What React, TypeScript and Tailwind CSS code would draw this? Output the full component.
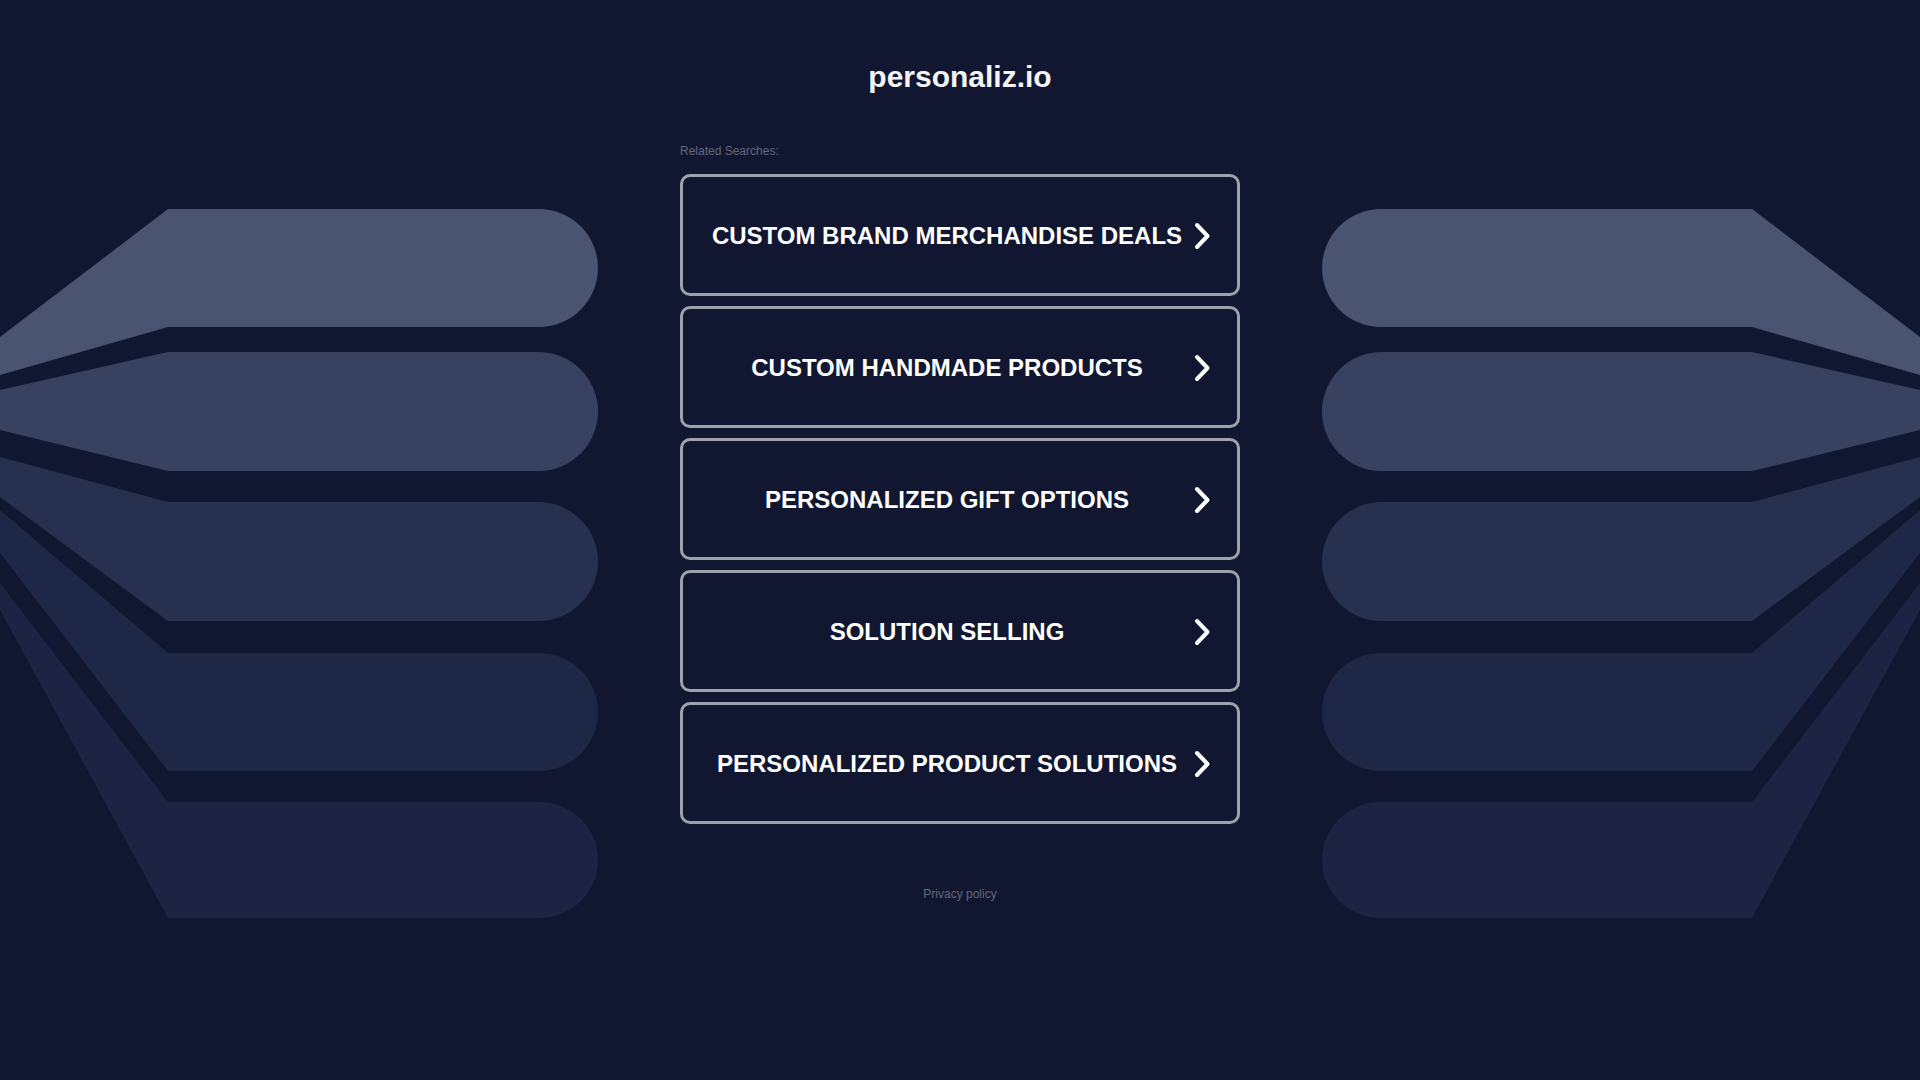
import React from "react";

type Ray = { top: number; bottom: number; lt: number; lb: number; fill: string };

// Fan of rounded bars drawn on each side of the page.
const rays: Ray[] = [
  { top: 209, bottom: 327, lt: 337, lb: 375, fill: "#4a5370" },
  { top: 352, bottom: 471, lt: 390, lb: 430, fill: "#394160" },
  { top: 502, bottom: 621, lt: 457, lb: 497, fill: "#283050" },
  { top: 653, bottom: 771, lt: 510, lb: 553, fill: "#1f2747" },
  { top: 802, bottom: 918, lt: 583, lb: 610, fill: "#1c2343" },
];

function rayPath(r: Ray) {
  const rad = (r.bottom - r.top) / 2;
  const end = 598 - rad;
  return `M0 ${r.lt} L168 ${r.top} L${end} ${r.top} A${rad} ${rad} 0 0 1 ${end} ${r.bottom} L168 ${r.bottom} L0 ${r.lb} Z`;
}

const searches = [
  "CUSTOM BRAND MERCHANDISE DEALS",
  "CUSTOM HANDMADE PRODUCTS",
  "PERSONALIZED GIFT OPTIONS",
  "SOLUTION SELLING",
  "PERSONALIZED PRODUCT SOLUTIONS",
];

function Chevron() {
  return (
    <svg width="18" height="28" viewBox="0 0 18 28" className="shrink-0">
      <polyline
        points="4,3 14.5,14 4,25"
        fill="none"
        stroke="#ffffff"
        strokeWidth="4"
        strokeLinecap="round"
        strokeLinejoin="round"
      />
    </svg>
  );
}

export default function App() {
  return (
    <div
      className="relative w-full h-[1080px] overflow-hidden bg-[#111730]"
      style={{ fontFamily: '"Liberation Sans", Arial, sans-serif' }}
    >
      <svg
        className="absolute inset-0 pointer-events-none"
        width="1920"
        height="1080"
        viewBox="0 0 1920 1080"
      >
        <g>
          {rays.map((r, i) => (
            <path key={`l${i}`} d={rayPath(r)} fill={r.fill} />
          ))}
        </g>
        <g transform="translate(1920,0) scale(-1,1)">
          {rays.map((r, i) => (
            <path key={`r${i}`} d={rayPath(r)} fill={r.fill} />
          ))}
        </g>
      </svg>

      <div className="relative flex flex-col items-center pt-[59px]">
        <h1 className="text-[30px] leading-[36px] font-bold text-[#f4f4f6]">personaliz.io</h1>

        <div className="w-[560px] mt-[49px]">
          <div className="text-[12px] leading-[14px] text-[#62677c]">Related Searches:</div>
          <div className="mt-[16px] flex flex-col gap-[10px]">
            {searches.map((s) => (
              <a
                key={s}
                href="#"
                className="flex items-center h-[122px] border-[3px] border-[#a0a2ab] rounded-[10px] pl-[18px] pr-[26px] pt-[1px]"
              >
                <span className="flex-1 text-center text-[24px] leading-[28px] font-bold text-white">
                  {s}
                </span>
                <Chevron />
              </a>
            ))}
          </div>
        </div>

        <a href="#" className="mt-[63px] text-[12px] leading-[14px] text-[#62677c]">
          Privacy policy
        </a>
      </div>
    </div>
  );
}
